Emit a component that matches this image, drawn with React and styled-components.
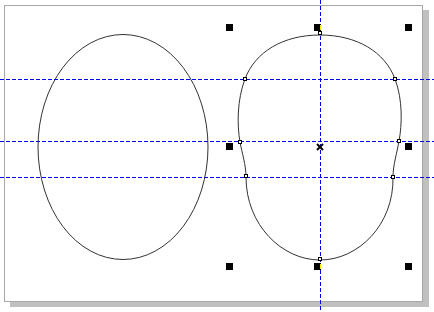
import React from "react";
import styled, { createGlobalStyle } from "styled-components";

const GlobalStyle = createGlobalStyle`
  html, body {
    margin: 0;
    padding: 0;
    background: #ffffff;
    font-family: "Liberation Sans", Arial, sans-serif;
  }
`;

const handles = [
  [226, 24], [314, 24], [405, 24],
  [226, 143], [405, 143],
  [226, 263], [314, 263], [405, 263],
];

const nodes = [
  [320, 33], [245, 79], [395, 79], [240, 142], [399, 141],
  [246, 176], [393, 177], [320, 259],
];

const shapePath =
  "M320,35 C283,35 255,52 245,79 C237,100 237,125 240,142 " +
  "C242,153 246,165 246,177 C246,225 282,260 320,260 " +
  "C358,260 394,225 393,177 C393,165 397,153 399,141 " +
  "C402,125 403,100 395,79 C385,52 357,35 320,35 Z";

const App = () => {
  return (
    <>
      <GlobalStyle />
      <Workspace>
        <Page />
        <Drawing width="434" height="312" viewBox="0 0 434 312">
          <g fill="none" stroke="#333" strokeWidth="1">
            <ellipse cx="123" cy="147" rx="85" ry="112.5" />
            <path d={shapePath} />
          </g>
          <g
            stroke="#0000e8"
            strokeWidth="1"
            strokeDasharray="4 2"
            shapeRendering="crispEdges"
          >
            <line x1="0" y1="79.5" x2="434" y2="79.5" />
            <line x1="0" y1="141.5" x2="434" y2="141.5" />
            <line x1="0" y1="177.5" x2="434" y2="177.5" />
            <line x1="320.5" y1="0" x2="320.5" y2="312" />
          </g>
          <g fill="#000" shapeRendering="crispEdges">
            {handles.map(([x, y], i) => (
              <rect key={i} x={x} y={y} width="7" height="7" />
            ))}
          </g>
          <g fill="#fff" stroke="#000" strokeWidth="1" shapeRendering="crispEdges">
            {nodes.map(([x, y], i) => (
              <rect key={i} x={x - 1.5} y={y - 1.5} width="3" height="3" />
            ))}
          </g>
          <g stroke="#ffe800" strokeWidth="1" shapeRendering="crispEdges">
            <line x1="320.5" y1="25" x2="320.5" y2="30" />
            <line x1="320.5" y1="264" x2="320.5" y2="269" />
          </g>
          <g stroke="#000" strokeWidth="2">
            <line x1="317" y1="144" x2="323" y2="150" />
            <line x1="323" y1="144" x2="317" y2="150" />
          </g>
        </Drawing>
      </Workspace>
    </>
  );
};

export default App;

const Workspace = styled.div`
  position: relative;
  width: 434px;
  height: 312px;
  overflow: hidden;
  background: #ffffff;
  padding: 5px 0 0 4px;
  box-sizing: border-box;
`;

const Page = styled.div`
  width: 419px;
  height: 297px;
  box-sizing: border-box;
  border: 1px solid #a8a8a8;
  background: #ffffff;
  box-shadow: 6px 5px 0 #c0c0c0;
`;

const Drawing = styled.svg`
  position: absolute;
  left: 0;
  top: 0;
  display: block;
`;
